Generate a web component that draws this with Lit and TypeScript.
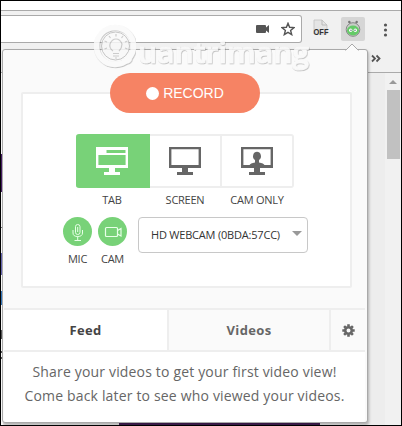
import { LitElement, html, css, svg } from "lit";
import { customElement } from "lit/decorators.js";

const monitor = svg`<path fill-rule="evenodd" d="M0 0h32v21H0zM2.400 2.200v15.800h27.200V2.200zM13 21h6v4h5v3H8v-3h5z"/>`;

@customElement("capture-panel")
class CapturePanel extends LitElement {
  static styles = css`
    :host { display: block; box-sizing: border-box; width: 366px; height: 374px; padding: 0 2px 0 1px;
      border: 1px solid #a9a9a9; border-radius: 3px; background: #fafafa; color: #444;
      box-shadow: 1px 2px 3px #0004; font-family: "Open Sans", sans-serif; }
    .top { height: 258px; display: flex; flex-direction: column; padding: 42px 13px 20px 17px; box-sizing: border-box; }
    .frame { flex: 1; border: 2px solid #eee; border-radius: 2px; background: #fff; }
    .record { display: flex; align-items: center; justify-content: center; gap: 4px; box-sizing: border-box;
      width: 150px; height: 40px; margin: -21px 0 0 87px; border-radius: 20px;
      background: #f68364; color: #fff; font: 14px "Liberation Sans", sans-serif; }
    .dot { width: 13px; height: 13px; border-radius: 50%; background: #fff; }
    .modes { display: flex; margin: 21px 0 0 53px; }
    .mode { width: 72px; text-align: center; font-size: 11px; line-height: 15px; white-space: nowrap; letter-spacing: -.25px; }
    .mode.first { width: 74px; }
    .label { position: relative; left: -1px; }
    .box { box-sizing: border-box; height: 54px; border: 2px solid #eee; border-left: 0; display: flex;
      justify-content: center; padding-top: 11px; margin-bottom: 4px; }
    .first .box { background: #78d278; border-color: #78d278; border-radius: 3px 0 0 3px; }
    .mode:last-child .box { border-radius: 0 3px 3px 0; }
    .box svg { fill: #666; }
    .first .box svg { fill: #fff; }
    .sources { display: flex; margin: 10px 0 0 40px; height: 52px; }
    .source { width: 29px; margin-right: 6px; text-align: center; font-size: 11px; line-height: 15px; letter-spacing: -.25px; }
    .round { width: 29px; height: 29px; border-radius: 50%; background: #78d278; margin-bottom: 5px; }
    .round svg { display: block; fill: none; stroke: #e8ffe8; }
    .select { margin-left: 5px; box-sizing: border-box; width: 170px; height: 36px; border: 1px solid #c8c8c8;
      border-radius: 4px; display: flex; align-items: center; justify-content: space-between; padding: 0 5px 2px 12px;
      font-size: 11px; letter-spacing: -.2px; white-space: nowrap; color: #333; }
    .arrow { border: 5px solid transparent; border-top-color: #999; border-bottom: 0; margin-bottom: 1px; }
    .tabs { display: flex; height: 44px; box-sizing: border-box; border: solid #eee; border-width: 2px 0;
      text-align: center; font: bold 13px/40px "Open Sans", sans-serif; letter-spacing: .35px; }
    .tab { width: 163px; background: #fff; color: #444; }
    .tab.idle { border-left: 2px solid #eee; background: #fafafa; color: #666; width: 160px; }
    .gear { flex: 1; border-left: 2px solid #eee; display: flex; align-items: center; justify-content: center; }
    .feed { height: 70px; background: #fff; box-sizing: border-box; padding-top: 8px; text-align: center;
      font-size: 14px; letter-spacing: .17px; line-height: 24px; color: #666; white-space: nowrap; border-radius: 0 0 3px 3px; }
  `;
  render() {
    return html`
      <div class="top">
        <div class="frame">
          <div class="record"><span class="dot"></span><span>RECORD</span></div>
          <div class="modes">
            <div class="mode first">
              <div class="box"><svg width="32" height="28">${svg`<path fill-rule="evenodd" d="M0 0h32v21H0zM10.500 3v3h19V3zM2.400 8v10h27.200V8zM13 21h6v4h5v3H8v-3h5z"/>`}</svg></div><span class="label">TAB</span>
            </div>
            <div class="mode"><div class="box"><svg width="32" height="28">${monitor}</svg></div><span class="label">SCREEN</span></div>
            <div class="mode"><div class="box"><svg width="32" height="28">${monitor}
              <path d="M8 19c1-2.500 3-3 6-3.600V13c-2-1-2.300-3.200-1.800-5 .8-4.200 6.800-4.200 7.600 0 .5 1.800.2 4-1.800 5v2.400c3 .6 5 1.100 6 3.600z"/></svg></div><span class="label">CAM ONLY</span></div>
          </div>
          <div class="sources">
            <div class="source">
              <div class="round"><svg width="29" height="29"><rect x="12.500" y="7.500" width="4.500" height="10" rx="2.200"/><path d="M10 13v3q0 3.500 4.700 3.500t4.800-3.500v-3M14.700 19.500v4M11.500 23.500h6.500M14.700 10v5"/></svg></div>MIC
            </div>
            <div class="source">
              <div class="round"><svg width="29" height="29" stroke-width="1.200"><rect x="7.500" y="10.500" width="12" height="9" rx="1"/><path d="M19.500 13.500l3.500-2v7.500l-3.500-2"/></svg></div>CAM
            </div>
            <div class="select"><span>HD WEBCAM (0BDA:57CC)</span><span class="arrow"></span></div>
          </div>
        </div>
      </div>
      <div class="tabs">
        <div class="tab">Feed</div>
        <div class="tab idle">Videos</div>
        <div class="gear"><svg width="13" height="13" viewBox="-6.500 -6.500 13 13">
          <circle r="3.300" fill="none" stroke="#666" stroke-width="2.600"/>
          <path stroke="#666" stroke-width="2.600" d="M0-4v-2.200M0 4v2.200M-4 0h-2.200M4 0h2.200M-2.900-2.900l-1.500-1.500M2.900 2.900l1.500 1.500M-2.900 2.900l-1.500 1.500M2.900-2.900l1.500-1.500"/></svg></div>
      </div>
      <div class="feed">Share your videos to get your first video view!<br>Come back later to see who viewed your videos.</div>`;
  }
}

@customElement("app-root")
class AppRoot extends LitElement {
  static styles = css`
    :host { display: flex; flex-direction: column; position: relative; box-sizing: border-box; width: 402px; height: 426px;
      border: 1px solid #000; overflow: hidden; background: #eee; font-family: "Open Sans", sans-serif; }
    .strip { height: 9px; background: #fff; border-bottom: 1px solid #aaa; }
    .bar { height: 32px; display: flex; background: #f1f1f1; padding-top: 4px; }
    .address { width: 300px; height: 26px; border: 1px solid #aaa; border-left: 0; border-radius: 0 3px 3px 0;
      background: #fff; display: flex; align-items: center; justify-content: flex-end; }
    .address svg { margin-right: 6px; }
    .address svg:first-child { margin-right: 11px; }
    .off { width: 18px; margin: 4px 14px 0 10px; }
    .ext { width: 24px; height: 24px; margin: 2px 0 0 -3px; background: #d6d6d6; border-radius: 2px; }
    .dots { margin: 7px 0 0 18px; }
    .marks { height: 26px; box-sizing: border-box; display: flex; justify-content: flex-end; background: #f1f1f1;
      border-bottom: 1px solid #aaa; padding: 7px 20px 0 0; }
    .page { flex: 1; display: flex; justify-content: space-between; }
    .content { width: 384px; display: flex; flex-direction: column; justify-content: flex-end; position: relative; background: #ededed; }
    .banner { height: 4px; width: 201px; margin-left: 118px; background: #462058; }
    .edge { position: absolute; left: 0; top: 0; }
    .scroll { width: 16px; background: #f1f1f1; display: flex; flex-direction: column; align-items: center; }
    .up { border: 4px solid transparent; border-top: 0; border-bottom-color: #999; margin: 7px 0 6px; }
    .thumb { width: 13px; height: 69px; background: #c1c1c1; }
    capture-panel { position: absolute; left: 1px; top: 48px; }
    .tip { position: absolute; left: 344px; top: 41px; }
    .mark { position: absolute; left: 90px; top: 19px; }
    .word { font: 600 29px "Open Sans", sans-serif; fill: #f9f9f9; stroke: #fbfbfb; stroke-width: .7px; }
  `;
  render() {
    return html`
      <div class="strip"></div>
      <div class="bar">
        <div class="address">
          <svg width="14" height="10" fill="#555"><path d="M1 1h8q1 0 1 1v1.500L13 1v8l-3-2.500V8q0 1-1 1H1Q0 9 0 8V2q0-1 1-1"/></svg>
          <svg width="14" height="14" viewBox="0 0 14 14" fill="none" stroke="#555" stroke-width="1.400"><path d="M7 1.300l1.600 4 4.400.3-3.400 2.800 1.100 4.200L7 10.300l-3.700 2.300 1.100-4.200L1 5.600l4.400-.3z"/></svg>
        </div>
        <svg class="off" width="18" height="18"><path d="M2 1h8l5 5v9H2z" fill="#e5e5e5" stroke="#bbb" stroke-width=".7"/><path d="M10 1v5h5" fill="none" stroke="#bbb"/>
          <text x="1.500" y="15.500" font-family="Liberation Sans" font-weight="bold" font-size="8.500" textLength="15" lengthAdjust="spacingAndGlyphs" fill="#333">OFF</text></svg>
        <div class="ext"><svg width="24" height="24"><path d="M10 8L8.500 5M14 8l1.500-3" stroke="#777" stroke-width="1.300"/><circle cx="8.300" cy="5" r="1.200" fill="#777"/><circle cx="15.700" cy="5" r="1.200" fill="#777"/>
          <circle cx="12" cy="12.500" r="6.800" fill="#c8cdc8" stroke="#888"/><ellipse cx="12" cy="13.500" rx="6" ry="5" fill="#65ca68"/>
          <circle cx="9.700" cy="13.300" r="1.700" fill="#fff"/><circle cx="14.300" cy="13.300" r="1.700" fill="#fff"/><circle cx="10" cy="13.300" r=".7" fill="#466"/><circle cx="14" cy="13.300" r=".7" fill="#466"/></svg></div>
        <svg class="dots" width="5" height="16" fill="#555"><circle cx="2.500" cy="3" r="1.600"/><circle cx="2.500" cy="8" r="1.600"/><circle cx="2.500" cy="13" r="1.600"/></svg>
      </div>
      <div class="marks"><svg width="10" height="9" fill="none" stroke="#555" stroke-width="1.800"><path d="M1 1.500l3 3-3 3M5.500 1.500l3 3-3 3"/></svg></div>
      <div class="page">
        <div class="content">
          <svg class="edge" width="3" height="354"><path fill="#fff" d="M0 0h2v354H0z"/><path fill="#461a64" d="M0 81h3v38H0z"/><path fill="#777" d="M0 154h3v1H0z"/><path fill="#6868b8" d="M0 180h2v22H0z"/><path fill="#347bc2" d="M0 218h3v14H0z"/><path fill="#555" d="M0 257h2v9H0zM0 278h2v2H0zM0 284h2v2H0z"/></svg>
          <div class="banner"></div>
        </div>
        <div class="scroll"><div class="up"></div><div class="thumb"></div></div>
      </div>
      <capture-panel></capture-panel>
      <svg class="tip" width="14" height="10"><path d="M0 8h1l6-6 6 6h1v2H0z" fill="#fafafa"/><path d="M0 8h1l6-6 6 6h1" fill="none" stroke="#a9a9a9"/></svg>
      <svg class="mark" width="222" height="54" opacity=".85">
        <defs><filter id="emboss" x="-5%" y="-10%" width="110%" height="125%"><feDropShadow dx=".6" dy=".8" stdDeviation=".7" flood-color="#666" flood-opacity=".55"/></filter></defs>
        <g filter="url(#emboss)" fill="none" stroke="#fafafa"><circle cx="24" cy="26" r="18.500" stroke-width="5.500"/><path d="M30 38l5 4q3 1 5-3" stroke-width="2.500"/></g>
        <circle cx="24.500" cy="26" r="14" fill="#f8f8f8" stroke="#bbb"/>
        <g fill="none" stroke="#c4c4c4" stroke-width="1.200"><path d="M22 31q-4-3-3-7 2-5 6-5t6 5q0 4-3 7"/><path d="M25 14v2.500M18 16l1.500 2M32 16l-1.500 2M13.500 21l2.500 1M36.500 21l-2.500 1M13.500 29l2.500-1M36.500 29l-2.500-1M22 33.500h6M22 36h6M24 38h2"/></g>
        <text filter="url(#emboss)" class="word" x="47" y="43" textLength="171" lengthAdjust="spacingAndGlyphs">uantrimang</text>
      </svg>`;
  }
}
